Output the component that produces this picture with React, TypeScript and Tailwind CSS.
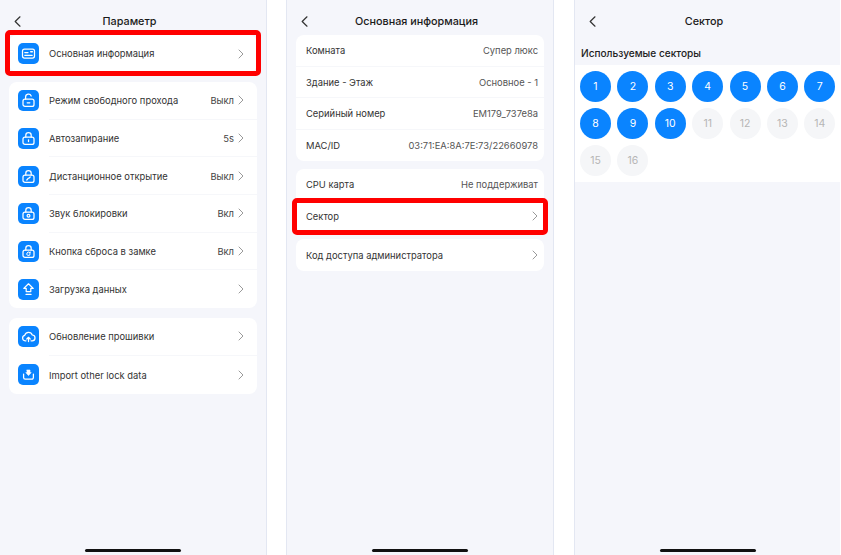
import React from "react";

const FONT = "font-['Inter','Noto_Sans',sans-serif]";

function Chevron({ className = "" }: { className?: string }) {
  return (
    <svg width="6" height="10" viewBox="0 0 6 10" fill="none" className={className}>
      <path d="M1 1l4 4-4 4" stroke="#9a9a9a" strokeWidth="1" strokeLinecap="round" strokeLinejoin="round" />
    </svg>
  );
}

function Highlight({ className }: { className: string }) {
  return <div className={`absolute border-[5px] border-[#ff0000] rounded-[5px] ${className}`} />;
}

function Header({ title }: { title: string }) {
  return (
    <div className="h-[35px] pt-[7px] pl-[14px] pr-[28px] flex items-center shrink-0">
      <svg width="7" height="11" viewBox="0 0 7 11" fill="none">
        <path d="M6 .8L1.2 5.5 6 10.2" stroke="#333" strokeWidth="1.2" strokeLinecap="round" strokeLinejoin="round" />
      </svg>
      <div className="flex-1 text-center text-[10.8px] leading-[16px] pt-[1px] font-medium text-[#1a1a1a]">{title}</div>
    </div>
  );
}

function HomeBar() {
  return (
    <div className="mt-auto pb-[3px] flex justify-center">
      <div className="w-[96px] h-[3px] rounded-full bg-[#111]" />
    </div>
  );
}

function IconBox({ children }: { children: React.ReactNode }) {
  return (
    <div className="w-[21px] h-[21px] rounded-[5px] bg-[#0a84ff] flex items-center justify-center shrink-0">
      <svg width="15" height="15" viewBox="0 0 15 15" fill="none" stroke="#fff" strokeWidth="1.25" strokeLinecap="round" strokeLinejoin="round">
        {children}
      </svg>
    </div>
  );
}

const Lock = ({ open = false }: { open?: boolean }) => (
  <>
    <rect x="2" y="6" width="11" height="7.4" rx="2" />
    <path d={open ? "M4.6 6V4a2.9 2.9 0 0 1 5.6-1" : "M4.8 6V4.2a2.7 2.7 0 0 1 5.4 0V6"} />
  </>
);

const icons = {
  card: (
    <>
      <rect x="1.5" y="3" width="12" height="9" rx="2" />
      <path d="M3.8 6.6h3.2M3.8 9.3h7.4" />
      <path d="M9.8 5.7h1.5" strokeWidth="1.6" />
    </>
  ),
  free: (
    <>
      <Lock open />
      <path d="M6.2 9.8h2.6" />
    </>
  ),
  auto: (
    <>
      <Lock />
      <path d="M7.5 8.8v1.8" />
    </>
  ),
  remote: (
    <>
      <Lock />
      <path d="M5.8 11l1.4-1.6M7.8 9.2l1.4-1.2" />
    </>
  ),
  sound: (
    <>
      <Lock />
      <circle cx="7.5" cy="9.8" r="1.4" />
    </>
  ),
  reset: (
    <>
      <Lock />
      <path d="M9.2 9.8a1.7 1.7 0 1 1-.5-1.2M9.2 7.9v1h-1" strokeWidth="1" />
    </>
  ),
  upload: (
    <>
      <path d="M7.5 1.8L2.8 6.4h2.4v3.2h4.6V6.4h2.4z" />
      <path d="M5 12.4h5" />
    </>
  ),
  cloud: (
    <>
      <path d="M5 11.8H4.2a2.8 2.8 0 0 1-.5-5.5 4 4 0 0 1 7.6-.3 2.9 2.9 0 0 1-.4 5.8H10" />
      <path d="M7.5 12.6V8.6M5.8 10l1.7-1.7L9.2 10" />
    </>
  ),
  importData: (
    <>
      <path d="M2.6 7v3.6a1.6 1.6 0 0 0 1.6 1.6h6.6a1.6 1.6 0 0 0 1.6-1.6V7" />
      <path d="M6 3h3v2.6h1.2L7.5 8.6 4.8 5.6H6z" fill="#fff" strokeWidth=".6" />
    </>
  ),
};

function SettingRow({
  icon,
  label,
  value,
  divider,
  highlight,
  rowClass,
}: {
  icon: React.ReactNode;
  label: string;
  value?: string;
  divider?: boolean;
  highlight?: boolean;
  rowClass: string;
}) {
  return (
    <div className={`relative flex items-center pl-[9px] ${rowClass}`}>
      <IconBox>{icon}</IconBox>
      <div className={`flex-1 self-stretch ml-[10px] pr-[13px] flex items-center text-[9.4px] text-[#333] ${divider ? "border-b border-[#f6f7fa]" : ""}`}>
        <span className="flex-1 pt-[2px]">{label}</span>
        {value && <span className="mr-[4px] pt-[2px] text-[#444]">{value}</span>}
        <Chevron />
      </div>
      {highlight && <Highlight className="-left-[4px] -right-[4px] -top-[5px] -bottom-[4px]" />}
    </div>
  );
}

function InfoRow({
  label,
  value,
  chevron,
  divider,
  highlight,
  rowClass,
}: {
  label: string;
  value?: string;
  chevron?: boolean;
  divider?: boolean;
  highlight?: boolean;
  rowClass: string;
}) {
  const textPad = divider ? "pt-[2px]" : "pt-[1px]";
  return (
    <div className={`relative flex items-center pl-[10px] pr-[6px] text-[9.4px] text-[#333] ${rowClass} ${divider ? "border-b border-[#f6f7fa]" : ""}`}>
      <span className={`flex-1 ${textPad}`}>{label}</span>
      {value && <span className={`text-[#555] ${textPad}`}>{value}</span>}
      {chevron && <Chevron />}
      {highlight && <Highlight className="-left-[4px] -right-[4px] -top-[3px] -bottom-[3px]" />}
    </div>
  );
}

const settingsA = [
  { icon: icons.free, label: "Режим свободного прохода", value: "Выкл" },
  { icon: icons.auto, label: "Автозапирание", value: "5s" },
  { icon: icons.remote, label: "Дистанционное открытие", value: "Выкл" },
  { icon: icons.sound, label: "Звук блокировки", value: "Вкл" },
  { icon: icons.reset, label: "Кнопка сброса в замке", value: "Вкл" },
  { icon: icons.upload, label: "Загрузка данных" },
];

const info = [
  { label: "Комната", value: "Супер люкс" },
  { label: "Здание - Этаж", value: "Основное - 1" },
  { label: "Серийный номер", value: "EM179_737e8a" },
  { label: "MAC/ID", value: "03:71:EA:8A:7E:73/22660978" },
];

const sectors = Array.from({ length: 16 }, (_, i) => i + 1);

export default function App() {
  return (
    <div className={`w-[841px] h-[555px] bg-white flex overflow-hidden ${FONT}`}>
      <div className="w-[267px] h-full bg-[#f5f6fb] border-r border-[#e3e7f2] flex flex-col">
        <Header title="Параметр" />
        <div className="mx-[9px] mb-[10px] rounded-[8px] bg-white">
          <SettingRow icon={icons.card} label="Основная информация" rowClass="h-[37px]" highlight />
        </div>
        <div className="mx-[9px] mb-[10px] rounded-[8px] bg-white">
          {settingsA.map((s, i) => (
            <SettingRow key={s.label} {...s} rowClass="h-[37.67px]" divider={i < settingsA.length - 1} />
          ))}
        </div>
        <div className="mx-[9px] rounded-[8px] bg-white">
          <SettingRow icon={icons.cloud} label="Обновление прошивки" rowClass="h-[38px]" divider />
          <SettingRow icon={icons.importData} label="Import other lock data" rowClass="h-[38px]" />
        </div>
        <HomeBar />
      </div>

      <div className="w-[268px] ml-[19px] h-full bg-[#f5f6fb] border-x border-[#e3e7f2] flex flex-col">
        <Header title="Основная информация" />
        <div className="mx-[9px] mb-[8px] rounded-[8px] bg-white">
          {info.map((r, i) => (
            <InfoRow key={r.label} {...r} rowClass="h-[31.5px]" divider={i < info.length - 1} />
          ))}
        </div>
        <div className="mx-[9px] mb-[7px] rounded-[8px] bg-white">
          <InfoRow label="CPU карта" value="Не поддерживат" rowClass="h-[31.6px]" />
          <InfoRow label="Сектор" chevron highlight rowClass="h-[31.6px]" />
        </div>
        <div className="mx-[9px] rounded-[8px] bg-white">
          <InfoRow label="Код доступа администратора" chevron rowClass="h-[32px]" />
        </div>
        <HomeBar />
      </div>

      <div className="w-[266px] ml-[20px] h-full bg-[#f5f6fb] border-l border-[#e3e7f2] flex flex-col">
        <Header title="Сектор" />
        <div className="h-[30px] pt-[7px] pl-[6px] flex items-center text-[10.1px] font-medium text-[#222]">
          Используемые секторы
        </div>
        <div className="bg-white pl-[5px] pt-[5.5px] pb-[5.5px]">
          <div className="grid grid-cols-[repeat(7,31px)] gap-[6.4px]">
            {sectors.map((n) => (
              <div
                key={n}
                className={`w-[31px] h-[31px] rounded-full flex items-center justify-center pt-[1px] text-[10.5px] ${
                  n <= 10 ? "bg-[#0a84ff] text-white" : "bg-[#f5f6f8] text-[#b5b5b5]"
                }`}
              >
                {n}
              </div>
            ))}
          </div>
        </div>
        <HomeBar />
      </div>
    </div>
  );
}
